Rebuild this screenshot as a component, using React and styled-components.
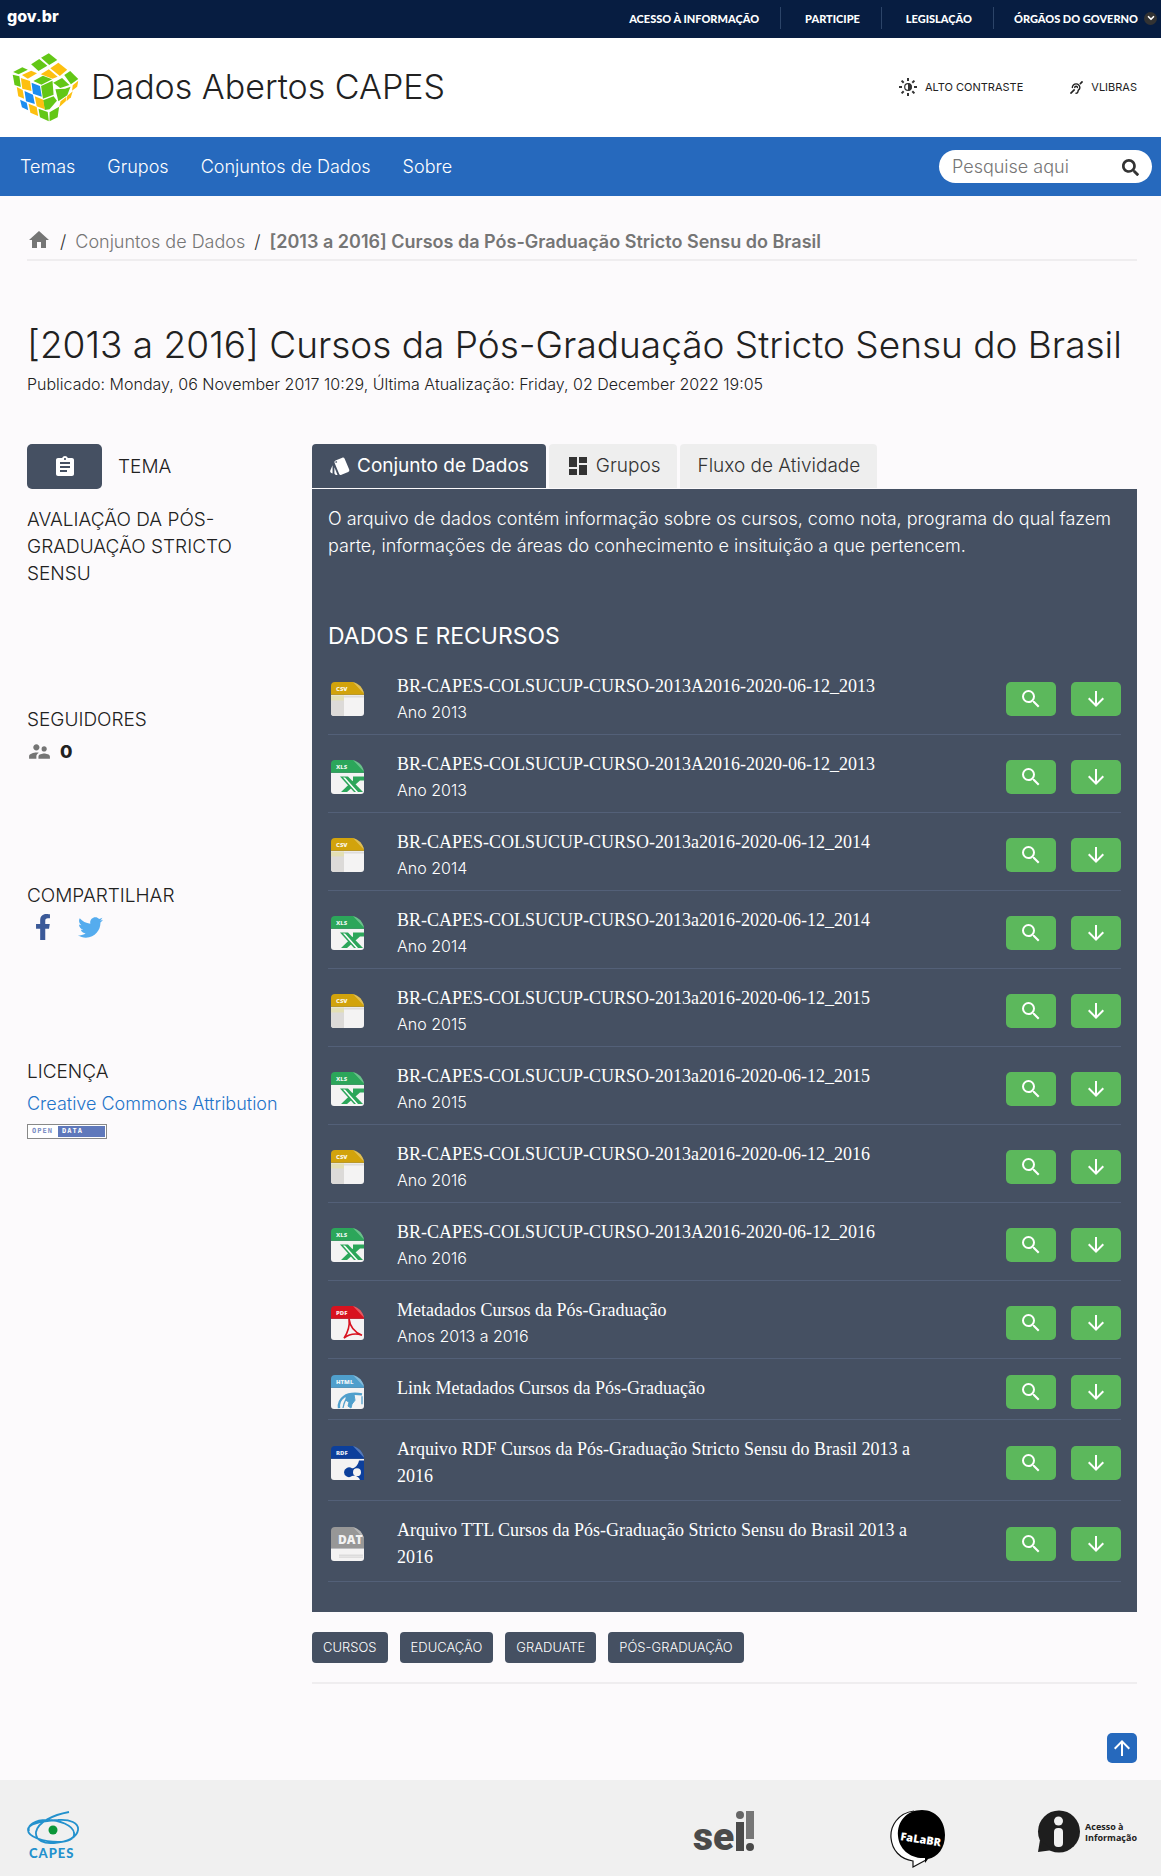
import React from "react";
import styled, { createGlobalStyle, css } from "styled-components";
import {
  MdHome,
  MdAssignment,
  MdStyle,
  MdDashboard,
  MdSupervisorAccount,
  MdSearch,
  MdArrowDownward,
  MdArrowUpward,
} from "react-icons/md";
import { FaFacebookF, FaTwitter, FaSearch, FaDeaf } from "react-icons/fa";
import { ChevronDown } from "lucide-react";

const slate = "#455062";
const blue = "#2669bd";
const sans = `Inter, "Noto Sans", sans-serif`;

const GlobalStyle = createGlobalStyle`
  * { box-sizing: border-box; }
  body { margin: 0; background: #fcfafc; color: #212121; font-family: ${sans}; font-weight: 300; }
  h1, h2, h3, p, ul, ol { margin: 0; padding: 0; font-weight: inherit; }
  ul, ol { list-style: none; }
  a { color: inherit; text-decoration: none; }
  button { border: 0; padding: 0; font: inherit; color: inherit; cursor: pointer; }
`;

/* ---------- Government bar ---------- */

const GovBar = styled.div`
  display: flex;
  align-items: center;
  justify-content: space-between;
  height: 38px;
  padding: 0 4px 2px 7px;
  background: #071d41;
  color: #fff;
`;

const GovBrand = styled.a`
  font-size: 16px;
  line-height: 20px;
  font-weight: 800;
  padding-bottom: 4px;
`;

const GovLinks = styled.ul`
  display: flex;
  align-items: center;
`;

const GovItem = styled.li`
  display: flex;
  align-items: center;
  gap: 6px;
  height: 22px;
  padding: 0 21px 0 24px;
  border-left: 1px solid ${(p) => (p.$first ? "transparent" : "#2c4468")};
  font-family: Lato, sans-serif;
  font-size: 11px;
  font-weight: 900;
  &:last-child { padding: 0 0 0 20px; }
`;

const Chevron = styled.span`
  display: grid;
  place-items: center;
  width: 13px;
  height: 13px;
  border-radius: 50%;
  background: #333;
`;

/* ---------- Header ---------- */

const Header = styled.header`
  display: flex;
  align-items: center;
  justify-content: space-between;
  height: 99px;
  padding: 0 24px 1px 12px;
  background: #fff;
`;

const Brand = styled.a`
  display: flex;
  align-items: center;
  gap: 12px;
  font-size: 34px;
  line-height: 40px;
`;

const Accessibility = styled.ul`
  display: flex;
  gap: 47px;
`;

const AccessButton = styled.button`
  display: flex;
  align-items: center;
  gap: 8px;
  background: none;
  font-size: 11px;
  line-height: 20px;
  font-weight: 400;
`;

const NavBar = styled.nav`
  display: flex;
  align-items: center;
  justify-content: space-between;
  height: 59px;
  padding: 0 9px 0 20px;
  background: ${blue};
  color: #fff;
`;

const NavLinks = styled.ul`
  display: flex;
  gap: 32px;
  font-size: 18px;
  line-height: 28px;
`;

const SearchForm = styled.form`
  display: flex;
  align-items: center;
  width: 213px;
  height: 33px;
  padding: 0 13px;
  border-radius: 17px;
  background: #fff;
  color: #333;
`;

const SearchInput = styled.input`
  flex: 1;
  min-width: 0;
  padding: 0;
  border: 0;
  outline: 0;
  background: none;
  font: 300 18px/28px ${sans};
  &::placeholder { color: #757575; opacity: 1; }
`;

const SearchSubmit = styled.button`
  display: flex;
  padding-top: 2px;
  background: none;
`;

/* ---------- Page body ---------- */

const Main = styled.main`
  padding: 32px 24px 0 27px;
`;

const Breadcrumb = styled.ol`
  display: flex;
  align-items: center;
  padding-bottom: 3px;
  border-bottom: 2px solid #efedef;
  font-size: 18px;
  line-height: 28px;
  color: #757575;
`;

const Crumb = styled.li`
  display: flex;
  align-items: center;
  font-weight: ${(p) => (p.$current ? 600 : 300)};
  &:not(:first-child)::before {
    content: "/";
    padding: 0 9px;
    color: #333;
    font-weight: 300;
  }
`;

const HomeLink = styled.a`
  display: flex;
  padding-bottom: 4px;
`;

const PageTitle = styled.h1`
  margin-top: 62px;
  font-size: 37px;
  line-height: 44px;
`;

const Published = styled.p`
  margin-top: 5px;
  font-size: 16px;
  line-height: 24px;
`;

const Columns = styled.div`
  display: grid;
  grid-template-columns: 285px minmax(0, 1fr);
  margin-top: 48px;
`;

/* ---------- Sidebar ---------- */

const SideSection = styled.section`
  min-height: ${(p) => (p.$tall ? 262 : 176)}px;
`;

const SideTitle = styled.h2`
  font-size: 19px;
  line-height: 27px;
  text-transform: uppercase;
`;

const ThemeHead = styled.div`
  display: flex;
  align-items: center;
  gap: 16px;
  height: 45px;
  margin-bottom: 17px;
`;

const ThemeButton = styled.button`
  display: grid;
  place-items: center;
  width: 75px;
  height: 45px;
  border-radius: 5px;
  background: ${slate};
  color: #fff;
`;

const ThemeName = styled.p`
  max-width: 230px;
  font-size: 19px;
  line-height: 27px;
  text-transform: uppercase;
`;

const SideRow = styled.div`
  display: flex;
  align-items: center;
  gap: ${(p) => p.$gap || 0}px;
  height: 36px;
  padding-left: ${(p) => p.$indent || 0}px;
  font-size: 18px;
`;

const Count = styled.strong`
  font-weight: 800;
`;

const ShareLink = styled.a`
  display: flex;
`;

const LicenseLink = styled.a`
  color: #1f74c9;
`;

const Badge = styled.div`
  display: flex;
  align-items: stretch;
  width: 80px;
  height: 15px;
  margin-top: 3px;
  border: 1px solid #888;
  padding: 1px;
  background: #fff;
  font: 700 7px/11px "DejaVu Sans Mono", monospace;
  letter-spacing: 1px;
  color: #7b8cc4;
`;

const BadgeLeft = styled.span`
  width: 29px;
  padding-left: 3px;
`;

const BadgeRight = styled.span`
  flex: 1;
  padding-left: 4px;
  background: #5f78bb;
  color: #fff;
`;

/* ---------- Tabs and panel ---------- */

const Tabs = styled.div`
  display: flex;
  gap: 3px;
`;

const Tab = styled.button`
  display: flex;
  align-items: center;
  gap: 6px;
  height: 44px;
  padding: 0 17px;
  border-radius: 4px 4px 0 0;
  background: #eeeeee;
  color: #333;
  font-size: 19px;
  line-height: 28px;
  font-weight: ${(p) => (p.$active ? 400 : 300)};
  ${(p) =>
    p.$active &&
    css`
      background: ${slate};
      color: #fff;
    `}
`;

const Panel = styled.section`
  margin-top: 1px;
  padding: 16px 16px 30px;
  background: ${slate};
  color: #fff;
`;

const Description = styled.p`
  font-size: 18px;
  line-height: 27px;
`;

const PanelTitle = styled.h2`
  margin-top: 63px;
  font-size: 23px;
  line-height: 28px;
  font-weight: 400;
`;

const Resources = styled.ul`
  margin-top: 7px;
`;

const Resource = styled.li`
  display: grid;
  grid-template-columns: 69px minmax(0, 1fr) auto;
  align-items: center;
  padding: 16px 0 10px;
  border-bottom: 1px solid #536078;
`;

const FileCell = styled.div`
  display: flex;
  padding-left: 3px;
`;

const ResourceText = styled.div`
  align-self: start;
  padding-right: 60px;
`;

const ResourceTitle = styled.h3`
  font-family: "Liberation Serif", serif;
  font-weight: 400;
  font-size: 18px;
  line-height: 27px;
`;

const ResourceNote = styled.p`
  font-size: 16px;
  line-height: 24px;
`;

const Actions = styled.div`
  display: flex;
  gap: 15px;
`;

const ActionButton = styled.button`
  display: grid;
  place-items: center;
  width: 50px;
  height: 34px;
  border-radius: 5px;
  background: #5cb85c;
  color: #fff;
`;

const Tags = styled.ul`
  display: flex;
  flex-wrap: wrap;
  gap: 12px;
  padding: 20px 0 19px;
  border-bottom: 2px solid #efedef;
`;

const TagLink = styled.a`
  display: block;
  padding: 0 11px;
  border-radius: 4px;
  background: ${slate};
  color: #fff;
  font-size: 13px;
  line-height: 31px;
  text-transform: uppercase;
`;

const TopRow = styled.div`
  display: flex;
  justify-content: flex-end;
  padding: 49px 0 17px;
`;

const TopLink = styled.a`
  display: grid;
  place-items: center;
  width: 30px;
  height: 30px;
  border-radius: 5px;
  background: ${blue};
  color: #fff;
`;

/* ---------- Footer ---------- */

const Footer = styled.footer`
  display: flex;
  align-items: flex-start;
  justify-content: space-between;
  height: 96px;
  padding: 30px 24px 0 27px;
  background: #f0f0f0;
`;

const FooterLinks = styled.div`
  display: grid;
  grid-template-columns: 197px 147px auto;
  align-items: start;
`;

const InfoLink = styled.a`
  display: flex;
  align-items: center;
  gap: 5px;
  font: 700 9px/11px "Open Sans", sans-serif;
`;

/* ---------- Drawings ---------- */

const CubeLogo = () => (
  <svg width="67" height="69" viewBox="34 157 182 207" preserveAspectRatio="none" aria-hidden="true">
    <g fill="#63c716">
      <path d="M113 171 134 158 157 178 135 193Z" />
      <path d="M86 191 108 175 130 195 106 211Z" />
      <path d="M37 214 62 200 77 207 52 221Z" />
      <path d="M36 222 54 227 58 259 41 253Z" />
      <path d="M92 241 118 225 143 236 114 252Z" />
      <path d="M113 256 144 240 147 282 118 294Z" />
      <path d="M118 299 147 287 156 300 136 326 123 328Z" />
      <path d="M106 324 131 334 134 362 110 350Z" />
      <path d="M136 335 162 318 158 350 136 362Z" />
      <path d="M176 223 192 211 214 235 194 251Z" />
      <path d="M146 246 170 232 190 253 165 262Z" />
      <path d="M152 266 178 264 193 258 184 284 160 302Z" />
    </g>
    <g fill="#fdc010">
      <path d="M138 203 160 186 184 207 164 226Z" />
      <path d="M112 221 134 206 158 228 144 234Z" />
      <path d="M61 223 86 210 102 218 77 234Z" />
      <path d="M58 232 83 241 87 271 62 264Z" />
      <path d="M47 259 63 268 67 294 51 287Z" />
      <path d="M96 287 119 297 123 326 101 317Z" />
      <path d="M79 309 101 319 105 346 84 336Z" />
      <path d="M166 302 182 288 180 302 162 320Z" />
      <path d="M184 286 199 272 194 290 182 302Z" />
      <path d="M199 254 214 240 211 258 197 270Z" />
    </g>
    <g fill="#1b8df0">
      <path d="M87 246 110 256 115 288 91 279Z" />
      <path d="M68 271 91 282 96 310 72 302Z" />
      <path d="M56 297 74 306 78 329 61 320Z" />
    </g>
  </svg>
);

const ContrastIcon = () => (
  <svg width="18" height="18" viewBox="0 0 18 18" fill="none" stroke="#333" strokeWidth="2" aria-hidden="true">
    <path d="M9 0V3M9 15V18M0 9H3M15 9H18M2.6 2.6 4.7 4.7M13.3 13.3 15.4 15.4M2.6 15.4 4.7 13.3M13.3 4.7 15.4 2.6" />
    <circle cx="9" cy="9" r="3.3" strokeWidth="1.2" />
    <path d="M9 5.2a3.8 3.8 0 0 1 0 7.6Z" fill="#333" stroke="none" />
  </svg>
);

const fileColors = {
  CSV: "#d2a30c",
  XLS: "#2ca65a",
  PDF: "#d8121f",
  HTML: "#4f9fcc",
  RDF: "#0c3f9b",
  DATA: "#979797",
};

const FileArt = ({ type, color }) => {
  if (type === "CSV")
    return (
      <g>
        <path d="M0 14H13V35H3a3 3 0 0 1-3-3Z" fill="#dcdad8" />
        <path d="M0 14H13V19H0Z" fill="#e3dfb4" />
        <path d="M13 14H33V16H13Z" fill="#dedcdc" />
      </g>
    );
  if (type === "XLS")
    return (
      <g fill={color}>
        <path d="M9 17H17L32 33H23Z" />
        <path d="M22 17H33V21H29L16 33H10L22 21Z" />
        <path d="M12 18H14L27 33H25Z" fill="#fff" />
      </g>
    );
  if (type === "PDF")
    return (
      <path
        d="M18 13c1 8 5 14 13 17-6-2-13-1-18 3 4-6 6-12 5-20Z"
        fill="none"
        stroke={color}
        strokeWidth="1.6"
      />
    );
  if (type === "HTML")
    return (
      <g fill="none" stroke={color}>
        <path d="M8 34C7 25 14 17 31 20" strokeWidth="2.4" />
        <path d="M12 34c1-7 4-11 8-13M31 22v8" strokeWidth="1.3" />
        <path d="M15 21l8-1 1 6-3 4-1 4-3-2 1-4-3-2Z" fill={color} />
      </g>
    );
  if (type === "RDF")
    return (
      <g fill={color}>
        <path d="M13 27a5 5 0 0 1 8-4c3 0 6-3 7-8h5v9a6 6 0 0 1 0 7v4h-4c-1-3-4-5-8-4a5 5 0 0 1-8-4Z" />
        <circle cx="26" cy="27" r="4" fill="#f4f3f3" />
      </g>
    );
  return <path d="M8 29H32M8 31H32" stroke="#cfcfcf" strokeWidth="1" />;
};

const FileIcon = ({ type }) => {
  const color = fileColors[type];
  const data = type === "DATA";
  const split = data ? 22 : 13;
  return (
    <svg width="33" height="34" viewBox="0 0 33 35" preserveAspectRatio="none" role="img" aria-label={type}>
      <path d={`M0 ${split}H33V32a3 3 0 0 1-3 3H3a3 3 0 0 1-3-3Z`} fill="#f4f3f3" />
      <path d={`M0 ${split}V4a4 4 0 0 1 4-4H22C28 2 32 6 33 12V${split}Z`} fill={color} />
      <path d="M22 0C28 2 32 6 33 12Z" fill="#fff" fillOpacity="0.3" />
      <text
        x={data ? 7 : 5}
        y={data ? 17 : 9}
        fontSize={data ? 12 : 6}
        fontWeight="800"
        fontFamily="Open Sans, sans-serif"
        fill="#fff"
        fillOpacity="0.9"
      >
        {data ? "DAT" : type}
      </text>
      <FileArt type={type} color={color} />
    </svg>
  );
};

const CapesLogo = () => (
  <svg width="53" height="50" viewBox="0 0 53 50" role="img" aria-label="CAPES">
    <g fill="none" stroke="#2391cd" strokeWidth="1.8">
      <path d="M42 2C26 5 11 12 9 22c-1 9 9 12 18 11 14-1 23-6 24-13 1-7-8-11-20-10C14 11 1 13 1 20c0 7 16 12 30 12 10 0 17-3 16-9C46 15 32 10 20 10 8 10 0 15 2 21" />
    </g>
    <circle cx="26" cy="20" r="4.5" fill="#0a9639" />
    <text x="2" y="48" fontFamily="Lato, sans-serif" fontSize="13" fontWeight="900" fill="#2391cd" letterSpacing="1">
      CAPES
    </text>
  </svg>
);

const SeiLogo = () => (
  <svg width="62" height="44" viewBox="0 0 62 44" role="img" aria-label="sei!">
    <text x="0" y="40" fontFamily="Roboto, sans-serif" fontSize="39" fontWeight="900" fill="#4a4a4a">
      se
    </text>
    <circle cx="47" cy="5" r="4" fill="#666" />
    <path d="M43 12H51V41H43Z" fill="#4a4a4a" />
    <path d="M53 1H61V29H53Z" fill="#777" />
    <circle cx="57" cy="37" r="4" fill="#4a4a4a" />
  </svg>
);

const FalaLogo = () => (
  <svg width="56" height="58" viewBox="0 0 56 58" role="img" aria-label="Fala.BR">
    <path d="M24 1C8 3 0 16 1 28 2 40 10 49 23 51V57L36 50" fill="#fff" stroke="#111" strokeWidth="1.2" />
    <path d="M32 0C46 0 55 11 55 25 55 38 48 47 38 49L35 53V48C20 49 9 39 8 26 7 11 17 0 32 0Z" fill="#000" />
    <text x="10" y="30" transform="rotate(9 10 30)" fontFamily="Open Sans, sans-serif" fontSize="11" fontWeight="800" fill="#fff">
      FaLaBR
    </text>
  </svg>
);

const InfoLogo = () => (
  <svg width="43" height="44" viewBox="0 0 43 44" aria-hidden="true">
    <circle cx="22" cy="21.5" r="21" fill="#1e1e1e" />
    <path d="M3 30 1 42 16 40Z" fill="#1e1e1e" />
    <circle cx="21.5" cy="11" r="4.5" fill="#f0f0f0" />
    <rect x="17" y="18" width="9" height="19" rx="4" fill="#f0f0f0" />
  </svg>
);

/* ---------- Data ---------- */

const base = "BR-CAPES-COLSUCUP-CURSO-";
const resources = [
  { type: "CSV", title: `${base}2013A2016-2020-06-12_2013`, note: "Ano 2013" },
  { type: "XLS", title: `${base}2013A2016-2020-06-12_2013`, note: "Ano 2013" },
  { type: "CSV", title: `${base}2013a2016-2020-06-12_2014`, note: "Ano 2014" },
  { type: "XLS", title: `${base}2013a2016-2020-06-12_2014`, note: "Ano 2014" },
  { type: "CSV", title: `${base}2013a2016-2020-06-12_2015`, note: "Ano 2015" },
  { type: "XLS", title: `${base}2013a2016-2020-06-12_2015`, note: "Ano 2015" },
  { type: "CSV", title: `${base}2013a2016-2020-06-12_2016`, note: "Ano 2016" },
  { type: "XLS", title: `${base}2013A2016-2020-06-12_2016`, note: "Ano 2016" },
  { type: "PDF", title: "Metadados Cursos da Pós-Graduação", note: "Anos 2013 a 2016" },
  { type: "HTML", title: "Link Metadados Cursos da Pós-Graduação" },
  { type: "RDF", title: "Arquivo RDF Cursos da Pós-Graduação Stricto Sensu do Brasil 2013 a 2016" },
  { type: "DATA", title: "Arquivo TTL Cursos da Pós-Graduação Stricto Sensu do Brasil 2013 a 2016" },
];

const govLinks = ["Acesso à informação", "Participe", "Legislação", "Órgãos do governo"];
const navLinks = ["Temas", "Grupos", "Conjuntos de Dados", "Sobre"];
const tags = ["Cursos", "Educação", "Graduate", "Pós-Graduação"];

export default function App() {
  return (
    <>
      <GlobalStyle />
      <GovBar>
        <GovBrand href="#">gov.br</GovBrand>
        <GovLinks>
          {govLinks.map((label, i) => (
            <GovItem key={label} $first={i === 0}>
              <a href="#">{label.toUpperCase()}</a>
              {i === govLinks.length - 1 && (
                <Chevron>
                  <ChevronDown size={10} strokeWidth={4} />
                </Chevron>
              )}
            </GovItem>
          ))}
        </GovLinks>
      </GovBar>

      <Header>
        <Brand href="#">
          <CubeLogo />
          Dados Abertos CAPES
        </Brand>
        <Accessibility>
          <li>
            <AccessButton type="button">
              <ContrastIcon />
              ALTO CONTRASTE
            </AccessButton>
          </li>
          <li>
            <AccessButton type="button">
              <FaDeaf size={13} />
              VLIBRAS
            </AccessButton>
          </li>
        </Accessibility>
      </Header>

      <NavBar>
        <NavLinks>
          {navLinks.map((label) => (
            <li key={label}>
              <a href="#">{label}</a>
            </li>
          ))}
        </NavLinks>
        <SearchForm role="search">
          <SearchInput type="text" placeholder="Pesquise aqui" aria-label="Pesquise aqui" />
          <SearchSubmit type="button" aria-label="Pesquisar">
            <FaSearch size={17} />
          </SearchSubmit>
        </SearchForm>
      </NavBar>

      <Main>
        <Breadcrumb>
          <Crumb>
            <HomeLink href="#" aria-label="Início">
              <MdHome size={24} />
            </HomeLink>
          </Crumb>
          <Crumb>
            <a href="#">Conjuntos de Dados</a>
          </Crumb>
          <Crumb $current>
            <a href="#">[2013 a 2016] Cursos da Pós-Graduação Stricto Sensu do Brasil</a>
          </Crumb>
        </Breadcrumb>

        <PageTitle>[2013 a 2016] Cursos da Pós-Graduação Stricto Sensu do Brasil</PageTitle>
        <Published>
          Publicado: Monday, 06 November 2017 10:29, Última Atualização: Friday, 02 December 2022 19:05
        </Published>

        <Columns>
          <aside>
            <SideSection $tall>
              <ThemeHead>
                <ThemeButton type="button" aria-label="Tema">
                  <MdAssignment size={24} />
                </ThemeButton>
                <SideTitle>Tema</SideTitle>
              </ThemeHead>
              <ThemeName>Avaliação da Pós-Graduação Stricto Sensu</ThemeName>
            </SideSection>
            <SideSection>
              <SideTitle>Seguidores</SideTitle>
              <SideRow $gap={8}>
                <MdSupervisorAccount size={25} color="#757575" />
                <Count>0</Count>
              </SideRow>
            </SideSection>
            <SideSection>
              <SideTitle>Compartilhar</SideTitle>
              <SideRow $gap={22} $indent={3}>
                <ShareLink href="#" aria-label="Facebook">
                  <FaFacebookF size={26} color="#3b5998" />
                </ShareLink>
                <ShareLink href="#" aria-label="Twitter">
                  <FaTwitter size={25} color="#55acee" />
                </ShareLink>
              </SideRow>
            </SideSection>
            <SideSection>
              <SideTitle>Licença</SideTitle>
              <SideRow>
                <LicenseLink href="#">Creative Commons Attribution</LicenseLink>
              </SideRow>
              <Badge>
                <BadgeLeft>OPEN</BadgeLeft>
                <BadgeRight>DATA</BadgeRight>
              </Badge>
            </SideSection>
          </aside>

          <div>
            <Tabs role="tablist">
              <Tab type="button" role="tab" aria-selected="true" $active>
                <MdStyle size={22} />
                Conjunto de Dados
              </Tab>
              <Tab type="button" role="tab" aria-selected="false">
                <MdDashboard size={24} />
                Grupos
              </Tab>
              <Tab type="button" role="tab" aria-selected="false">
                Fluxo de Atividade
              </Tab>
            </Tabs>
            <Panel>
              <Description>
                O arquivo de dados contém informação sobre os cursos, como nota, programa do qual fazem parte,
                informações de áreas do conhecimento e insituição a que pertencem.
              </Description>
              <PanelTitle>DADOS E RECURSOS</PanelTitle>
              <Resources>
                {resources.map((item, i) => (
                  <Resource key={i}>
                    <FileCell>
                      <FileIcon type={item.type} />
                    </FileCell>
                    <ResourceText>
                      <ResourceTitle>
                        <a href="#">{item.title}</a>
                      </ResourceTitle>
                      {item.note && <ResourceNote>{item.note}</ResourceNote>}
                    </ResourceText>
                    <Actions>
                      <ActionButton type="button" aria-label="Visualizar">
                        <MdSearch size={24} />
                      </ActionButton>
                      <ActionButton type="button" aria-label="Baixar">
                        <MdArrowDownward size={24} />
                      </ActionButton>
                    </Actions>
                  </Resource>
                ))}
              </Resources>
            </Panel>
            <Tags>
              {tags.map((tag) => (
                <li key={tag}>
                  <TagLink href="#">{tag}</TagLink>
                </li>
              ))}
            </Tags>
          </div>
        </Columns>
        <TopRow>
          <TopLink href="#" aria-label="Voltar ao topo">
            <MdArrowUpward size={24} />
          </TopLink>
        </TopRow>
      </Main>

      <Footer>
        <a href="#">
          <CapesLogo />
        </a>
        <FooterLinks>
          <a href="#">
            <SeiLogo />
          </a>
          <a href="#">
            <FalaLogo />
          </a>
          <InfoLink href="#">
            <InfoLogo />
            <span>
              Acesso à<br />
              Informação
            </span>
          </InfoLink>
        </FooterLinks>
      </Footer>
    </>
  );
}
